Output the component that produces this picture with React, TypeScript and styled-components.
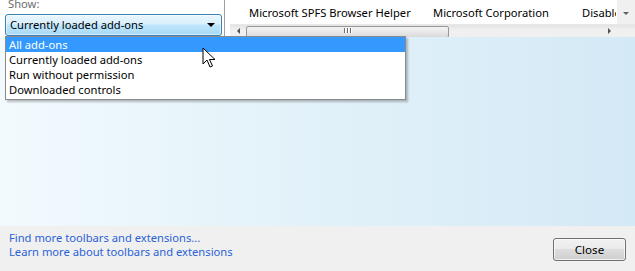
import React from "react";
import styled, { createGlobalStyle } from "styled-components";

const Global = createGlobalStyle`
  html, body { margin: 0; padding: 0; }
  body { font-family: "Noto Sans", "Open Sans", Arial, sans-serif; font-size: 11.2px; color: #000; }
`;

const Window = styled.div`
  position: relative;
  width: 635px;
  height: 271px;
  overflow: hidden;
  display: flex;
  flex-direction: column;
  background: #f0f0f0;
`;

const Top = styled.div`
  height: 37px;
  display: flex;
  background: #fff;
  flex-shrink: 0;
`;

const Sidebar = styled.div`
  width: 225px;
  padding: 0 0 0 5px;
  box-sizing: border-box;
  display: flex;
  flex-direction: column;
  border-right: 1px solid #a0a0a0;
`;

const ShowLabel = styled.div`
  height: 14px;
  line-height: 8px;
  color: #6d6d6d;
  padding-left: 3px;
  overflow: hidden;
`;

const Combo = styled.div`
  width: 217px;
  height: 22px;
  box-sizing: border-box;
  border: 1px solid #3c7fb1;
  border-radius: 3px;
  background: linear-gradient(#eaf6fd 0%, #d9f0fc 45%, #bee6fd 50%, #a7d9f5 100%);
  display: flex;
  align-items: center;
  justify-content: space-between;
  padding: 0 6px 0 4px;
  box-shadow: inset 0 0 0 1px rgba(255,255,255,0.5);
`;

const ComboText = styled.span`
  line-height: 20px;
  white-space: nowrap;
`;

const Arrow = styled.span`
  width: 0;
  height: 0;
  border-left: 4px solid transparent;
  border-right: 4px solid transparent;
  border-top: 4px solid #000;
`;

const Gap = styled.div`
  width: 5px;
  background: #fff;
`;

const ListPane = styled.div`
  flex: 1;
  display: flex;
  flex-direction: column;
  min-width: 0;
`;

const HeaderRow = styled.div`
  height: 25px;
  display: flex;
`;

const Cells = styled.div`
  flex: 1;
  display: flex;
  align-items: center;
  overflow: hidden;
  white-space: nowrap;
  padding-left: 19px;
`;

const Cell = styled.span<{ $w: number }>`
  flex: 0 0 ${(p) => p.$w}px;
  overflow: hidden;
  color: #000;
`;

const VScroll = styled.div`
  width: 18px;
  background: #f0f0f0;
  display: flex;
  align-items: center;
  justify-content: center;
  padding-top: 3px;
  box-sizing: border-box;
`;

const SmallDown = styled.span`
  width: 0;
  height: 0;
  border-left: 3px solid transparent;
  border-right: 3px solid transparent;
  border-top: 3px solid #606060;
`;

const HScroll = styled.div`
  height: 12px;
  background: linear-gradient(#e3e3e3, #f0f0f0 40%, #f0f0f0);
  display: flex;
  align-items: center;
  padding-right: 18px;
  border-top: 1px solid #e8e8e8;
`;

const ScrollBtn = styled.div`
  width: 16px;
  height: 12px;
  display: flex;
  align-items: center;
  justify-content: center;
`;

const LeftTri = styled.span`
  width: 0;
  height: 0;
  border-top: 3px solid transparent;
  border-bottom: 3px solid transparent;
  border-right: 3px solid #505050;
`;

const RightTri = styled.span`
  width: 0;
  height: 0;
  border-top: 3px solid transparent;
  border-bottom: 3px solid transparent;
  border-left: 3px solid #505050;
`;

const Track = styled.div`
  flex: 1;
  height: 12px;
`;

const Thumb = styled.div`
  width: 203px;
  height: 12px;
  margin-top: 1px;
  box-sizing: border-box;
  border: 1px solid #979797;
  border-radius: 2px;
  background: linear-gradient(#f3f3f3, #e8e8e8 50%, #d9d9d9);
  display: flex;
  justify-content: center;
  align-items: flex-start;
  gap: 1px;
  padding-top: 1px;
`;

const Grip = styled.span`
  width: 1px;
  height: 5px;
  background: #6e6e6e;
  border-right: 1px solid #fff;
`;

const Body = styled.div`
  flex: 1;
  background: linear-gradient(90deg, #f2fafe 0%, #e6f4fa 35%, #d4e9f6 100%);
`;

const Footer = styled.div`
  height: 45px;
  flex-shrink: 0;
  background: #f0f0f0;
  display: flex;
  align-items: flex-start;
  justify-content: space-between;
  padding: 5px 9px 0 9px;
  box-sizing: border-box;
`;

const Links = styled.div`
  display: flex;
  flex-direction: column;
`;

const Link = styled.a`
  color: #2a62d6;
  text-decoration: none;
  line-height: 14px;
  cursor: pointer;
`;

const CloseButton = styled.button`
  margin-top: 7px;
  width: 73px;
  height: 23px;
  border: 1px solid #707070;
  border-radius: 3px;
  background: linear-gradient(#f2f2f2 0%, #ebebeb 45%, #dddddd 50%, #cfcfcf 100%);
  box-shadow: inset 0 0 0 1px rgba(255,255,255,0.7);
  font-family: inherit;
  font-size: 11.6px;
  color: #000;
  padding: 0;
`;

const DropList = styled.div`
  position: absolute;
  left: 5px;
  top: 36px;
  width: 401px;
  box-sizing: border-box;
  background: #fff;
  border: 1px solid #8a8a8a;
  padding-bottom: 2px;
  box-shadow: 2px 2px 2px rgba(0,0,0,0.25);
`;

const Option = styled.div<{ $active?: boolean }>`
  height: 15px;
  line-height: 15px;
  padding-left: 3px;
  white-space: nowrap;
  background: ${(p) => (p.$active ? "#3399ff" : "transparent")};
  color: ${(p) => (p.$active ? "#fff" : "#000")};
`;

const Cursor = styled.svg`
  position: absolute;
  left: 202px;
  top: 47px;
`;

export default function App() {
  const options = [
    "All add-ons",
    "Currently loaded add-ons",
    "Run without permission",
    "Downloaded controls",
  ];
  return (
    <>
      <Global />
      <Window>
        <Top>
          <Sidebar>
            <ShowLabel>Show:</ShowLabel>
            <Combo>
              <ComboText>Currently loaded add-ons</ComboText>
              <Arrow />
            </Combo>
          </Sidebar>
          <Gap />
          <ListPane>
            <HeaderRow>
              <Cells>
                <Cell $w={184}>Microsoft SPFS Browser Helper</Cell>
                <Cell $w={149}>Microsoft Corporation</Cell>
                <Cell $w={34}>Disabled</Cell>
              </Cells>
              <VScroll>
                <SmallDown />
              </VScroll>
            </HeaderRow>
            <HScroll>
              <ScrollBtn>
                <LeftTri />
              </ScrollBtn>
              <Track>
                <Thumb>
                  <Grip />
                  <Grip />
                  <Grip />
                </Thumb>
              </Track>
              <ScrollBtn>
                <RightTri />
              </ScrollBtn>
            </HScroll>
          </ListPane>
        </Top>
        <Body />
        <Footer>
          <Links>
            <Link>Find more toolbars and extensions...</Link>
            <Link>Learn more about toolbars and extensions</Link>
          </Links>
          <CloseButton>Close</CloseButton>
        </Footer>
        <DropList>
          {options.map((o, i) => (
            <Option key={o} $active={i === 0}>
              {o}
            </Option>
          ))}
        </DropList>
        <Cursor width="14" height="22" viewBox="0 0 14 22">
          <path
            d="M1 1 L1 17 L5 13 L8 20 L10.5 19 L7.5 12.5 L13 12.5 Z"
            fill="#fff"
            stroke="#000"
            strokeWidth="1"
            strokeLinejoin="miter"
          />
        </Cursor>
      </Window>
    </>
  );
}
